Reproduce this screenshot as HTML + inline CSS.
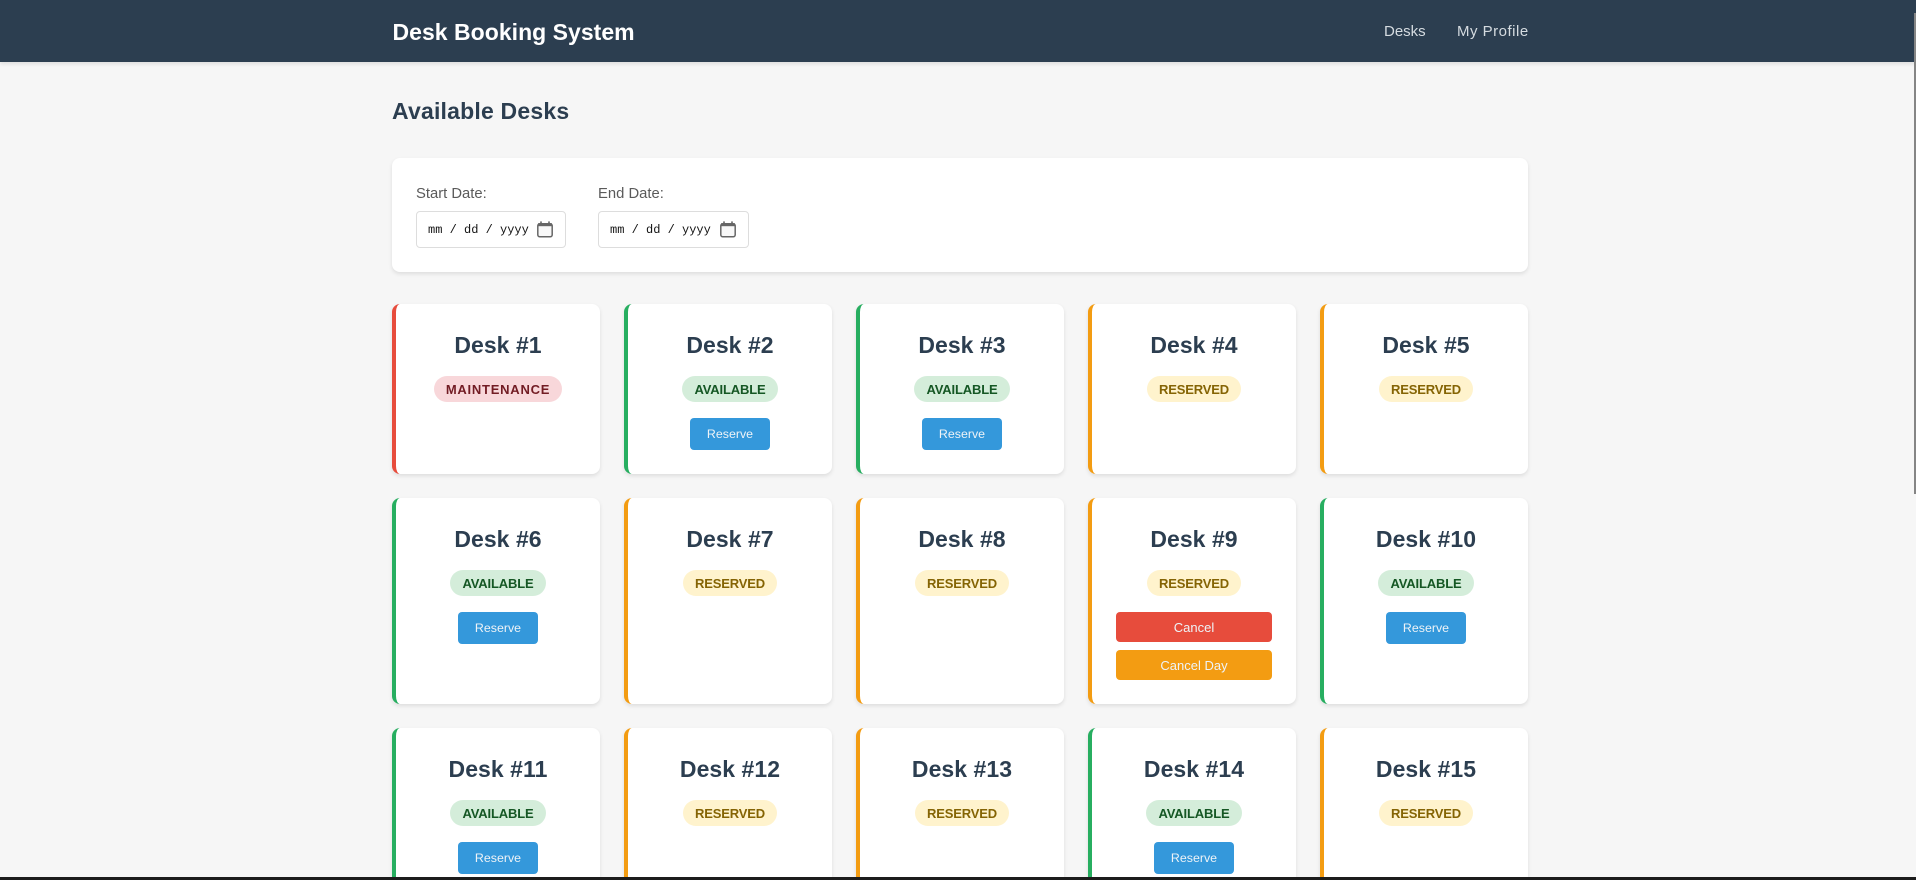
<!DOCTYPE html>
<html lang="en">
<head>
<meta charset="utf-8">
<title>Desk Booking System</title>
<style>
*{box-sizing:border-box;margin:0;padding:0}
html,body{width:1916px;height:880px;overflow:hidden;background:#f6f6f6;font-family:"Liberation Sans",sans-serif}
#wrap{position:relative;width:1916px;height:880px;overflow:hidden;background:#f6f6f6}
.nav,.brand,.link,.h,.filter,.lbl,.inp,.card,.bar,.sb{position:absolute}
.nav{left:0;top:0;width:1916px;height:62px;background:#2c3e50;box-shadow:0 2px 4px rgba(0,0,0,.1)}
.brand{left:392.5px;top:18px;font-size:23px;line-height:28px;font-weight:700;color:#fff;letter-spacing:.03px;white-space:nowrap}
.link{top:23px;font-size:15px;line-height:18px;color:#d5dbe0;white-space:nowrap}
.h{left:392px;top:97px;font-size:23px;line-height:28px;font-weight:700;color:#2c3e50;letter-spacing:.2px;white-space:nowrap}
.filter{left:392px;top:158px;width:1136px;height:114px;background:#fff;border-radius:8px;box-shadow:0 2px 4px rgba(0,0,0,.1)}
.lbl{top:186px;font-size:14.8px;line-height:17px;color:#5a5a5a;white-space:nowrap}
.inp{top:211px;height:37px;background:#fff;border:1px solid #ddd;border-radius:4px;font-family:"Liberation Mono",monospace;font-size:12px;line-height:36px;color:#111;padding-left:11px;white-space:pre}
.inp svg{position:absolute;right:11px;top:8px}
.card{width:208px;background:#fff;border-left:4px solid;border-radius:8px;box-shadow:0 2px 4px rgba(0,0,0,.1)}
.last{height:149px;border-radius:8px 8px 0 0}
.g{border-left-color:#27ae60}.o{border-left-color:#f39c12}.r{border-left-color:#e74c3c}
.t{position:absolute;left:0;right:0;top:27px;text-align:center;font-size:23px;line-height:28px;font-weight:700;color:#2c3e50;letter-spacing:.05px;white-space:nowrap}
.b{position:absolute;top:72px;left:50%;transform:translateX(-50%);height:26px;border-radius:13px;font-size:13px;line-height:28px;font-weight:700;text-align:center;white-space:nowrap}
.ma{width:128px;background:#f8d7da;color:#721c24;letter-spacing:.75px}
.av{width:96px;background:#d4edda;color:#155724;letter-spacing:-.15px}
.re{width:94px;background:#fff3cd;color:#856404;letter-spacing:-.15px}
.btn{position:absolute;color:#eef3f7;text-align:center;border-radius:4px;white-space:nowrap}
.rs{top:114px;left:62px;width:80px;height:32px;font-size:12.4px;line-height:33px;background:#3498db}
.cn{top:114px;left:24px;width:156px;height:30px;font-size:13px;line-height:31px;background:#e74c3c}
.cd{top:152px;left:24px;width:156px;height:30px;font-size:13px;line-height:31px;background:#f39c12}
.sb{left:1914px;top:13px;width:2px;height:481px;background:#858585}
.bar{left:0;top:877px;width:1916px;height:3px;background:#1c1c1c}
</style>
</head>
<body>
<div id="wrap">
<div class="nav"></div>
<div class="brand">Desk Booking System</div>
<div class="link" style="left:1384px">Desks</div>
<div class="link" style="left:1457px;letter-spacing:.5px">My Profile</div>
<div class="h">Available Desks</div>
<div class="filter"></div>
<div class="lbl" style="left:416px">Start Date:</div>
<div class="lbl" style="left:598px">End Date:</div>
<div class="inp" style="left:416px;width:150px">mm / dd / yyyy<svg width="18" height="18" viewBox="0 0 18 18"><rect x="1.8" y="3.8" width="14.4" height="13" rx="2" fill="#f8f8f8" stroke="#666" stroke-width="1.5"/><rect x="2" y="3.2" width="14" height="3" fill="#666"/><rect x="4.2" y="1.4" width="1.6" height="2.6" fill="#666"/><rect x="12.2" y="1.4" width="1.6" height="2.6" fill="#666"/></svg></div>
<div class="inp" style="left:598px;width:151px">mm / dd / yyyy<svg width="18" height="18" viewBox="0 0 18 18"><rect x="1.8" y="3.8" width="14.4" height="13" rx="2" fill="#f8f8f8" stroke="#666" stroke-width="1.5"/><rect x="2" y="3.2" width="14" height="3" fill="#666"/><rect x="4.2" y="1.4" width="1.6" height="2.6" fill="#666"/><rect x="12.2" y="1.4" width="1.6" height="2.6" fill="#666"/></svg></div>

<div class="card r" style="left:392px;top:304px;height:170px"><div class="t">Desk #1</div><div class="b ma">MAINTENANCE</div></div>
<div class="card g" style="left:624px;top:304px;height:170px"><div class="t">Desk #2</div><div class="b av">AVAILABLE</div><div class="btn rs">Reserve</div></div>
<div class="card g" style="left:856px;top:304px;height:170px"><div class="t">Desk #3</div><div class="b av">AVAILABLE</div><div class="btn rs">Reserve</div></div>
<div class="card o" style="left:1088px;top:304px;height:170px"><div class="t">Desk #4</div><div class="b re">RESERVED</div></div>
<div class="card o" style="left:1320px;top:304px;height:170px"><div class="t">Desk #5</div><div class="b re">RESERVED</div></div>

<div class="card g" style="left:392px;top:498px;height:206px"><div class="t">Desk #6</div><div class="b av">AVAILABLE</div><div class="btn rs">Reserve</div></div>
<div class="card o" style="left:624px;top:498px;height:206px"><div class="t">Desk #7</div><div class="b re">RESERVED</div></div>
<div class="card o" style="left:856px;top:498px;height:206px"><div class="t">Desk #8</div><div class="b re">RESERVED</div></div>
<div class="card o" style="left:1088px;top:498px;height:206px"><div class="t">Desk #9</div><div class="b re">RESERVED</div><div class="btn cn">Cancel</div><div class="btn cd">Cancel Day</div></div>
<div class="card g" style="left:1320px;top:498px;height:206px"><div class="t">Desk #10</div><div class="b av">AVAILABLE</div><div class="btn rs">Reserve</div></div>

<div class="card g last" style="left:392px;top:728px"><div class="t">Desk #11</div><div class="b av">AVAILABLE</div><div class="btn rs">Reserve</div></div>
<div class="card o last" style="left:624px;top:728px"><div class="t">Desk #12</div><div class="b re">RESERVED</div></div>
<div class="card o last" style="left:856px;top:728px"><div class="t">Desk #13</div><div class="b re">RESERVED</div></div>
<div class="card g last" style="left:1088px;top:728px"><div class="t">Desk #14</div><div class="b av">AVAILABLE</div><div class="btn rs">Reserve</div></div>
<div class="card o last" style="left:1320px;top:728px"><div class="t">Desk #15</div><div class="b re">RESERVED</div></div>

<div class="sb"></div>
<div class="bar"></div>
</div>
</body>
</html>
